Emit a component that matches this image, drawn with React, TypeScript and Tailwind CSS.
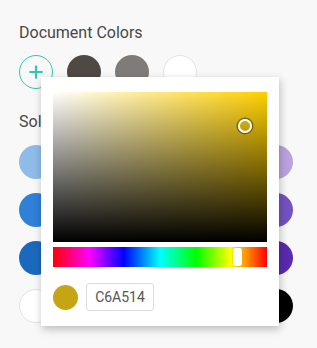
import { Plus } from "lucide-react";

const docColors = ["#4f4845", "#7f7b78", "#ffffff"];

const solidColors = [
  ["#8fbbe9", "#9ad0f2", "#95e0d8", "#a6dba0", "#f3d98b", "#b9a3dd"],
  ["#2f80d7", "#37a6e3", "#2cbfae", "#5cb85c", "#efb92e", "#7451c2"],
  ["#1b69bc", "#1f86c6", "#1e9a8c", "#3e8e3e", "#d9951a", "#5a2ab0"],
  ["#ffffff", "#e6e6e6", "#b3b3b3", "#808080", "#4d4d4d", "#000000"],
];

const Swatch = ({ color }: { color: string }) => (
  <div
    className={`w-[34px] h-[34px] rounded-full ${color === "#ffffff" ? "border border-[#e3e3e3]" : ""}`}
    style={{ backgroundColor: color }}
  />
);

const ColorPicker = () => (
  <div className="absolute left-[41px] top-[77px] w-[238px] h-[249px] bg-white shadow-[1px_3px_8px_rgba(0,0,0,0.25)] p-3">
    <div className="relative w-[214px] h-[150px] bg-[#ffd000] mt-[3px]">
      <div className="absolute inset-0 bg-gradient-to-r from-white to-transparent" />
      <div className="absolute inset-0 bg-gradient-to-b from-transparent to-black" />
      <div className="absolute left-[185px] top-[27px] w-[14px] h-[14px] rounded-full border-[2.5px] border-white shadow-[0_0_0_1.5px_rgba(80,60,0,0.6)]" />
    </div>
    <div className="relative mt-[5px] w-[214px] h-[20px] bg-[linear-gradient(to_right,#ff0000,#ff00ff_17%,#0000ff_33%,#00ffff_50%,#00ff00_67%,#ffff00_83%,#ff0000)]">
      <div className="absolute left-[180px] top-[1px] w-[9px] h-[18px] bg-white rounded-[2px] shadow-[0_0_1px_rgba(0,0,0,0.4)]" />
    </div>
    <div className="flex items-center gap-2 mt-[16px]">
      <div className="w-[25px] h-[25px] rounded-full bg-[#c6a514]" />
      <div className="w-[68px] h-[28px] border border-[#dddddd] rounded-[3px] flex items-center justify-center text-[14px] text-[#555555]">
        C6A514
      </div>
    </div>
  </div>
);

export default function App() {
  return (
    <div className="relative w-[317px] h-[348px] bg-[#f8f8f8] pl-[19px] pt-[21px] font-['Roboto',sans-serif] text-[#474747] overflow-hidden">
      <div className="text-[16px] leading-[24px]">Document Colors</div>
      <div className="flex gap-[14px] mt-[10px]">
        <div className="w-[34px] h-[34px] rounded-full border-[1.5px] border-[#2ec7b3] flex items-center justify-center">
          <Plus size={20} strokeWidth={2.5} className="text-[#2ec7b3]" />
        </div>
        {docColors.map((c) => (
          <Swatch key={c} color={c} />
        ))}
      </div>
      <div className="text-[16px] leading-[24px] mt-[21px]">Solid Colors</div>
      <div className="grid grid-cols-[repeat(6,34px)] gap-[14px] mt-[11px]">
        {solidColors.flat().map((c, i) => (
          <Swatch key={i} color={c} />
        ))}
      </div>
      <ColorPicker />
    </div>
  );
}
